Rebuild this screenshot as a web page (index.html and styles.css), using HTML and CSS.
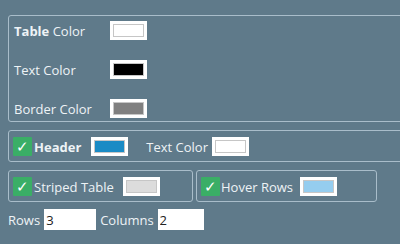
FILE: index.html
```html
<!DOCTYPE html>
<html lang="en">
<head>
    <meta charset="UTF-8">
    <title>Table Style</title>
    <link rel="stylesheet" href="styles.css">
</head>
<body>
    <div class="settings">
        <fieldset class="panel colors">
            <label class="field-label"><b>Table</b> Color</label>
            <span class="swatch"><span class="fill" style="background:#ffffff"></span></span>

            <label class="field-label">Text Color</label>
            <span class="swatch"><span class="fill" style="background:#000000"></span></span>

            <label class="field-label">Border Color</label>
            <span class="swatch"><span class="fill" style="background:#808080"></span></span>
        </fieldset>

        <fieldset class="panel option header-box">
            <span class="check">&#10003;</span>
            <b class="option-label">Header</b>
            <span class="swatch"><span class="fill" style="background:#1a8bc5"></span></span>
            <span class="option-label sub-label">Text Color</span>
            <span class="swatch"><span class="fill" style="background:#ffffff"></span></span>
        </fieldset>

        <div class="option-row">
            <fieldset class="panel option striped">
                <span class="check">&#10003;</span>
                <span class="option-label">Striped Table</span>
                <span class="swatch"><span class="fill" style="background:#dcdcdc"></span></span>
            </fieldset>
            <fieldset class="panel option hover">
                <span class="check">&#10003;</span>
                <span class="option-label">Hover Rows</span>
                <span class="swatch"><span class="fill" style="background:#95cdef"></span></span>
            </fieldset>
        </div>

        <div class="size-row">
            <label for="rows">Rows</label>
            <input type="text" id="rows" value="3">
            <label for="cols">Columns</label>
            <input type="text" id="cols" value="2">
        </div>
    </div>
</body>
</html>
```

FILE: styles.css
```css
/* Base */
body {
    font-family: "Open Sans", "Liberation Sans", sans-serif;
    font-size: 13px;
    background-color: #5f7a8a;
    color: #eef3f6;
    margin: 0;
    padding: 0;
    overflow: hidden;
}

.settings {
    padding: 15px 0 0 8px;
    width: 460px;
}

/* Boxes */
.panel {
    border: 1px solid #a9bdca;
    border-radius: 3px;
    margin: 0;
    min-width: 0;
}

.colors {
    display: grid;
    grid-template-columns: 96px auto;
    justify-content: start;
    align-items: center;
    row-gap: 20px;
    padding: 5px 0 3px 5px;
}

.field-label b {
    font-weight: 700;
}

/* Colour swatches */
.swatch {
    display: block;
    width: 37px;
    height: 19px;
    padding: 3px;
    box-sizing: border-box;
    background-color: #ffffff;
}

.fill {
    display: block;
    height: 100%;
    border: 1px solid #c6c6c6;
    box-sizing: border-box;
}

/* Option boxes */
.option {
    display: flex;
    align-items: center;
    padding: 6px 4px 5px;
    margin-top: 8px;
}

.check {
    width: 19px;
    height: 19px;
    background-color: #3aae66;
    color: #ffffff;
    font-size: 15px;
    line-height: 19px;
    text-align: center;
    border-radius: 1px;
    margin-right: 2px;
}

.option-label {
    margin-right: 9px;
}

.header-box .option-label {
    margin-right: 10px;
}

.header-box .sub-label {
    margin-left: 18px;
    margin-right: 4px;
}

.option-row {
    display: flex;
    gap: 3px;
}

.striped {
    width: 185px;
    box-sizing: border-box;
}

.hover {
    width: 181px;
    box-sizing: border-box;
}

.hover .check {
    margin-right: 1px;
}

.hover .option-label {
    margin-right: 7px;
}

/* Rows / Columns */
.size-row {
    display: flex;
    align-items: center;
    margin-top: 7px;
}

.size-row input {
    width: 52px;
    height: 21px;
    box-sizing: border-box;
    border: none;
    padding: 0 2px;
    font-family: inherit;
    font-size: 13px;
    color: #222;
    margin: 0 4px 0 4px;
}

.size-row input#cols {
    width: 46px;
}
```
